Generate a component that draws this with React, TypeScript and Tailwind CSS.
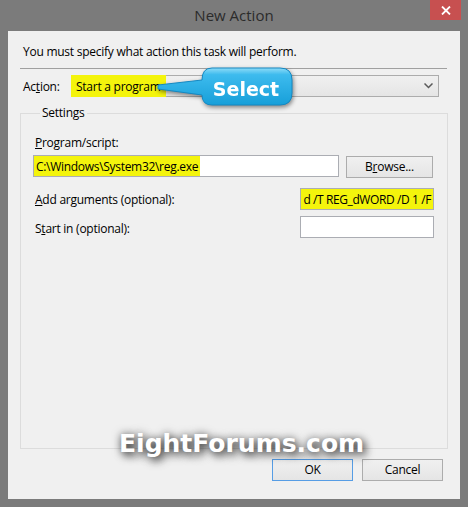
import React from "react";

const ui = "font-['Open_Sans','Noto_Sans',sans-serif] text-[12px] leading-[16px] tracking-[-0.25px] text-black";

function Field({ className = "", bg = "bg-white", children }: { className?: string; bg?: string; children?: React.ReactNode }) {
  return (
    <div className={`h-[22px] border border-[#abadb3] overflow-hidden flex items-center ${bg} ${className}`}>
      {children}
    </div>
  );
}

function Button({ label, primary }: { label: React.ReactNode; primary?: boolean }) {
  return (
    <div
      className={`w-[81px] h-[22px] flex items-center justify-center border bg-gradient-to-b from-[#f0f0f0] to-[#e5e5e5] ${
        primary ? "border-[#569de5]" : "border-[#acacac]"
      }`}
    >
      {label}
    </div>
  );
}

function Callout() {
  return (
    <svg
      width="160"
      height="56"
      viewBox="0 0 160 56"
      className="absolute left-[150px] top-[64px] drop-shadow-[1px_2px_2px_rgba(0,0,0,0.45)]"
    >
      <defs>
        <linearGradient id="bub" x1="0" y1="0" x2="0" y2="1">
          <stop offset="0" stopColor="#8fdcf8" />
          <stop offset="0.18" stopColor="#3dbbee" />
          <stop offset="1" stopColor="#179fd9" />
        </linearGradient>
      </defs>
      <path
        d="M62 4 H130 Q142 4 142 16 V29 Q142 41 130 41 H62 Q52 41 52 31 L8 25 L8 21 L52 16 Q52 4 62 4 Z"
        fill="url(#bub)"
        stroke="#1488c2"
        strokeWidth="1"
      />
      <text
        x="96"
        y="32"
        textAnchor="middle"
        fill="#ffffff"
        fontSize="19"
        fontWeight="bold"
        fontFamily="'DejaVu Sans', Verdana, sans-serif"
      >
        Select
      </text>
    </svg>
  );
}

export default function App() {
  return (
    <div className="relative w-[468px] h-[507px] bg-[#7b7b7b] flex flex-col overflow-hidden">
      {/* Title bar */}
      <div className="relative h-[31px] flex items-center justify-center">
        <span className="font-['Open_Sans','Noto_Sans',sans-serif] text-[15px] text-[#2b2b2b] -mt-[1px]">
          New Action
        </span>
        <div className="absolute right-[7px] top-0 w-[31px] h-[20px] bg-[#c75050] flex items-center justify-center">
          <svg width="10" height="9" viewBox="0 0 10 9">
            <path d="M1 0.5 L9 8.5 M9 0.5 L1 8.5" stroke="#fff" strokeWidth="1.8" />
          </svg>
        </div>
      </div>

      {/* Client area */}
      <div className={`mx-[8px] h-[468px] bg-[#f0f0f0] flex flex-col pt-[13px] ${ui}`}>
        <p className="pl-[15px]">You must specify what action this task will perform.</p>

        <div className="mt-[8px] ml-[12px] mr-[13px] h-px bg-[#a0a0a0]" />

        <div className="mt-[6px] ml-[15px] flex items-center">
          <span className="w-[48px] pt-[2px]">
            Ac<u>t</u>ion:
          </span>
          <div className="relative w-[368px] h-[22px] border border-[#acacac] bg-gradient-to-b from-[#f0f0f0] to-[#e5e5e5] flex items-center">
            <span className="h-[22px] -my-px -ml-px px-[5px] pt-[1px] bg-[#f4f40c] flex items-center">Start a program</span>
            <svg width="9" height="6" viewBox="0 0 9 6" className="ml-auto mr-[5px]">
              <path d="M0.5 0.5 L4.5 4.5 L8.5 0.5" stroke="#5a5a5a" strokeWidth="1.5" fill="none" />
            </svg>
          </div>
        </div>

        <fieldset className="mt-[8px] ml-[12px] w-[428px] h-[344px] border border-[#dcdcdc] pl-[12px] pr-[13px] pt-[14px]">
          <legend className="ml-[7px] px-[2px]">Settings</legend>

          <div className="ml-[2px]">
            <u>P</u>rogram/script:
          </div>
          <div className="mt-[4px] flex items-start">
            <Field className="w-[306px]">
              <span className="h-full px-[2px] pt-[1px] tracking-[-0.3px] bg-[#f4f40c] flex items-center">
                C:\Windows\System32\reg.exe
              </span>
            </Field>
            <div className="ml-[7px] mt-px w-[87px] h-[22px] border border-[#acacac] bg-gradient-to-b from-[#f0f0f0] to-[#e5e5e5] flex items-center justify-center">
              B<u>r</u>owse...
            </div>
          </div>

          <div className="mt-[10px] flex items-center">
            <span className="ml-[2px] pt-[2px] flex-1">
              <u>A</u>dd arguments (optional):
            </span>
            <Field className="w-[134px] justify-end" bg="bg-[#f4f40c]">
              <span className="whitespace-nowrap pr-[2px] pt-[1px] tracking-[-0.4px]">d /T REG_dWORD /D 1 /F</span>
            </Field>
          </div>

          <div className="mt-[6px] flex items-center">
            <span className="ml-[2px] pt-[3px] flex-1">
              S<u>t</u>art in (optional):
            </span>
            <Field className="w-[134px]" />
          </div>
        </fieldset>

        <div className="mt-[10px] mr-[17px] flex justify-end gap-[9px]">
          <Button label="OK" primary />
          <Button label="Cancel" />
        </div>
      </div>

      <Callout />

      {/* Watermark */}
      <div className="absolute left-[119px] top-[428px] font-['DejaVu_Sans',Verdana,sans-serif] font-bold text-[25px] leading-[32px] text-white [text-shadow:0_0_8px_rgba(0,0,0,0.5),3px_4px_8px_rgba(0,0,0,0.7)]">
        EightForums.com
      </div>
    </div>
  );
}
